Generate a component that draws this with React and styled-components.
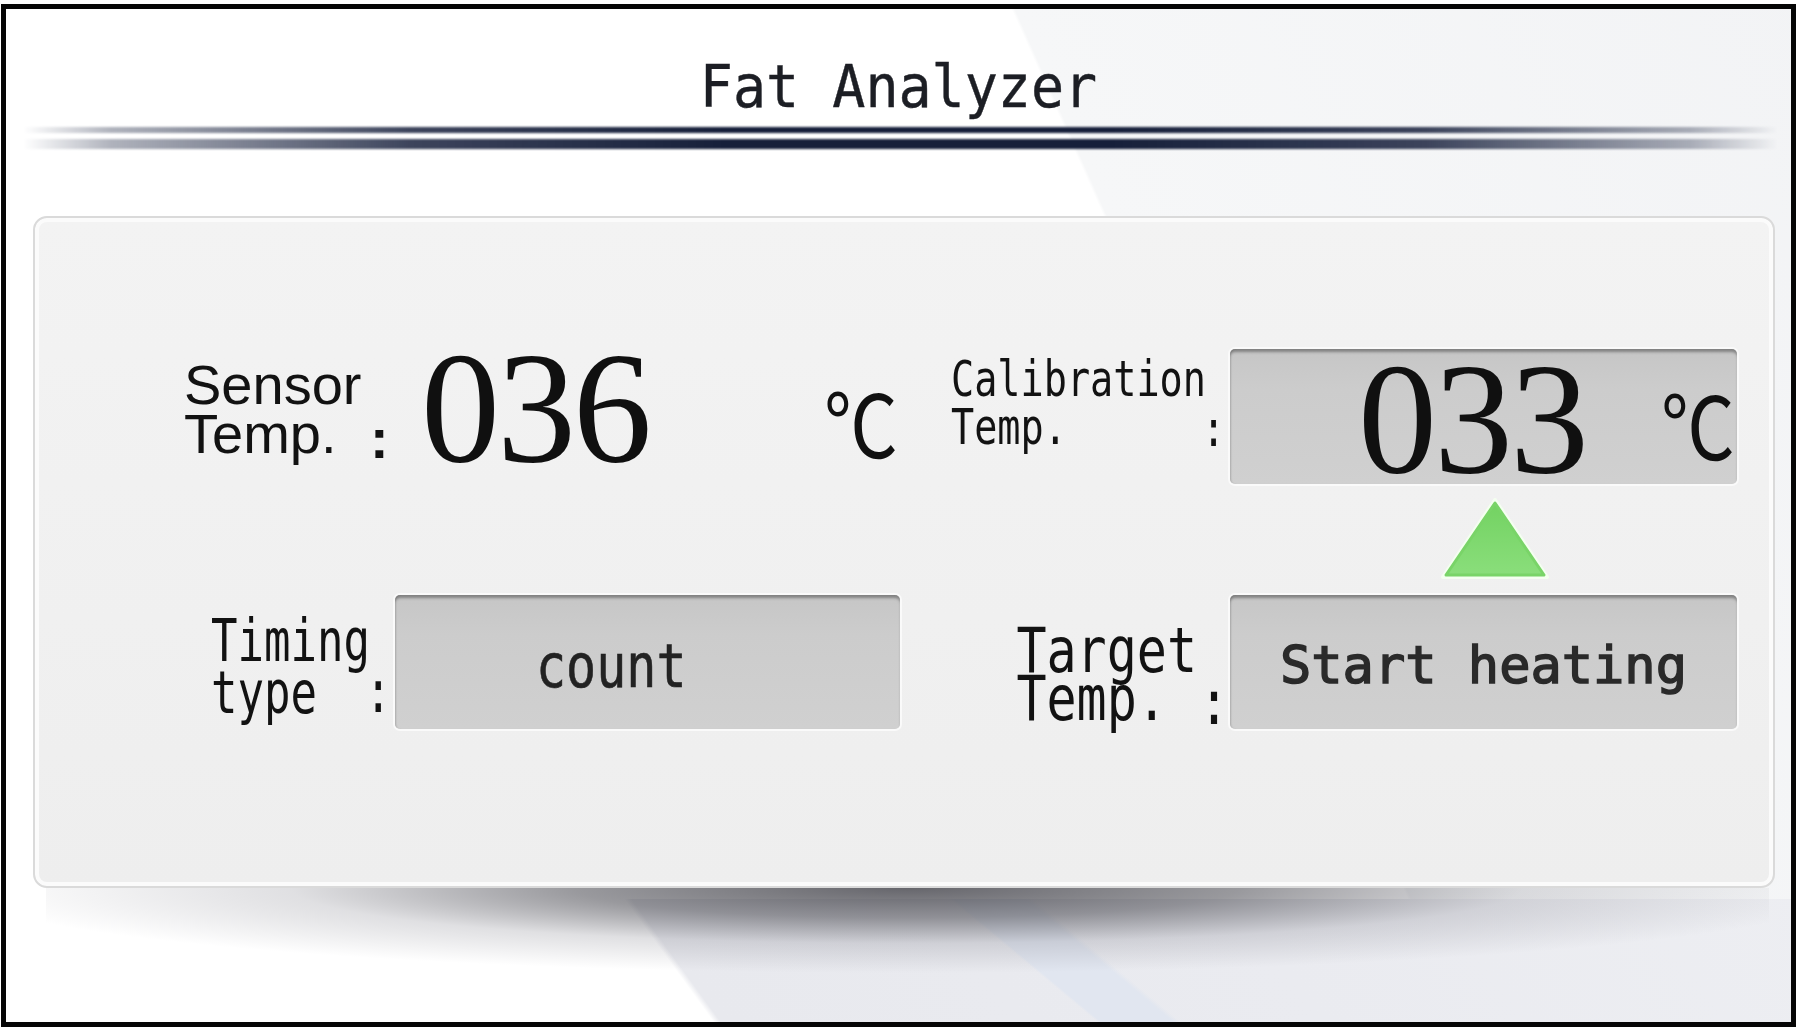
import styled, { createGlobalStyle } from 'styled-components';

const GlobalStyle = createGlobalStyle`
  html, body {
    margin: 0;
    padding: 0;
    background: #ffffff;
  }
  body {
    font-family: 'Liberation Sans', Arial, sans-serif;
    color: #151515;
  }
`;

const Frame = styled.div`
  box-sizing: border-box;
  width: 1795px;
  height: 1023px;
  margin: 4px 0 0 1px;
  border: 5px solid #050505;
  display: flex;
  flex-direction: column;
  padding-top: 47px;
  overflow: hidden;
  background-color: #ffffff;
  background-image:
    linear-gradient(39.8deg, transparent 50%, #e1e6f0 50.5%, #e1e6f0 60%, transparent 61%),
    linear-gradient(54deg, transparent 50%, #e8e9ee 50.3%, #eaebf0 75%, #edeef2 100%),
    linear-gradient(66deg, transparent 50%, #f6f7f8 50.2%, #f2f3f5 100%);
  background-size: 600px 132px, 2338px 140px, 1300px 1100px;
  background-position: 723px 890px, -500px 890px, 574px -59px;
  background-repeat: no-repeat;
`;

const Title = styled.h1`
  margin: 0;
  height: 60px;
  font-family: 'DejaVu Sans Mono', 'Liberation Mono', monospace;
  font-weight: normal;
  font-size: 55px;
  line-height: 60px;
  text-align: center;
  color: #1c1e24;
  -webkit-text-stroke: 0.4px #1c1e24;
  transform: scaleY(1.08);
`;

const Rule = styled.div`
  margin: ${(p) => p.$gap}px 14px 0 18px;
  height: ${(p) => p.$h}px;
  background: linear-gradient(
    90deg,
    rgba(27, 36, 64, 0) 0%,
    rgba(27, 36, 64, 0.35) 5%,
    rgba(27, 36, 64, 0.85) 22%,
    #161f3a 40%,
    #161f3a 62%,
    rgba(27, 36, 64, 0.85) 80%,
    rgba(27, 36, 64, 0.35) 95%,
    rgba(27, 36, 64, 0) 100%
  );
  filter: blur(${(p) => p.$blur}px);
`;

const Panel = styled.div`
  box-sizing: border-box;
  margin: 67px 16px 0 27px;
  padding: 131px 36px 157px 149px;
  border: 2px solid #dadada;
  border-radius: 14px;
  background: linear-gradient(180deg, #f3f3f3 0%, #f0f0f0 60%, #eeeeee 100%);
  box-shadow: inset 0 0 0 4px #fbfbfb;
  display: grid;
  grid-template-columns: 186px 25px 505px 51px 255px 24px 507px;
  grid-template-rows: 135px 111px 134px;
`;

const Shadow = styled.div`
  margin: 0 22px 0 40px;
  height: 85px;
  background: radial-gradient(
    ellipse 55% 100% at 50% 0%,
    rgba(75, 75, 82, 0.85) 0%,
    rgba(85, 85, 92, 0.6) 35%,
    rgba(130, 130, 140, 0.25) 65%,
    rgba(255, 255, 255, 0) 100%
  );
`;

const Cell = styled.div`
  grid-column: ${(p) => p.$col};
  grid-row: ${(p) => p.$row};
  align-self: start;
  justify-self: ${(p) => p.$justify || 'stretch'};
  margin-top: ${(p) => p.$top || 0}px;
  margin-left: ${(p) => p.$left || 0}px;
  margin-right: ${(p) => p.$right || 0}px;
`;

const SansLabel = styled.div`
  font-family: 'Liberation Sans', Arial, sans-serif;
  font-size: 56px;
  line-height: 49px;
  color: #121212;
  white-space: nowrap;
`;

const MonoText = styled.div`
  font-family: 'DejaVu Sans Mono', 'Liberation Mono', monospace;
  font-size: ${(p) => p.$size}px;
  line-height: ${(p) => p.$lh}px;
  color: ${(p) => p.$color || '#121212'};
  -webkit-text-stroke: ${(p) => p.$stroke || 0}px ${(p) => p.$color || '#121212'};
  white-space: pre;
  transform: scaleY(${(p) => p.$scale || 1});
  transform-origin: left top;
`;

const Colon = styled.div`
  font-family: 'Liberation Sans', Arial, sans-serif;
  font-weight: bold;
  font-size: 56px;
  line-height: 46px;
  color: #121212;
`;

const ValueRow = styled.div`
  display: flex;
  justify-content: space-between;
  align-items: flex-start;
  padding: 0 2px 0 26px;
`;

const BigNumber = styled.div`
  font-family: 'Liberation Serif', 'Times New Roman', serif;
  font-size: 158px;
  line-height: 108px;
  letter-spacing: -3px;
  color: #101010;
  margin-top: ${(p) => p.$top}px;
`;

const Unit = styled.div`
  font-family: 'Noto Sans CJK SC', 'DejaVu Sans', sans-serif;
  font-size: 86px;
  line-height: 86px;
  color: #101010;
  margin-top: ${(p) => p.$top}px;
  margin-left: ${(p) => p.$gap || 0}px;
  transform: scaleX(0.86);
  transform-origin: right top;
`;

const Box = styled.div`
  box-sizing: border-box;
  height: ${(p) => p.$h}px;
  border-radius: 5px;
  background: linear-gradient(180deg, #c6c6c6 0%, #cccccc 30%, #d0d0d0 100%);
  box-shadow:
    inset 0 4px 3px -1px rgba(0, 0, 0, 0.35),
    inset 2px 0 2px -1px rgba(0, 0, 0, 0.12),
    0 0 0 2px #fafafa;
  display: flex;
  align-items: flex-start;
  justify-content: ${(p) => p.$justify || 'flex-start'};
  padding: ${(p) => p.$pad};
`;

const Triangle = () => (
  <svg width="110" height="84" viewBox="0 0 110 84">
    <defs>
      <linearGradient id="tri" x1="0" y1="0" x2="0" y2="1">
        <stop offset="0" stopColor="#73d262" />
        <stop offset="1" stopColor="#8ade7b" />
      </linearGradient>
    </defs>
    <polygon
      points="55,3 107,80 3,80"
      fill="url(#tri)"
      stroke="#f4fff0"
      strokeWidth="4"
      strokeLinejoin="round"
    />
    <polygon
      points="55,6 104,78 6,78"
      fill="url(#tri)"
      stroke="#79d468"
      strokeWidth="3"
      strokeLinejoin="round"
    />
  </svg>
);

const App = () => {
  return (
    <>
      <GlobalStyle />
      <Frame>
        <Title>Fat Analyzer</Title>
        <Rule $gap={11} $h={6} $blur={0.8} />
        <Rule $gap={6} $h={10} $blur={0.8} />
        <Panel>
          {/* sensor temp */}
          <Cell $col={1} $row={1} $top={11}>
            <SansLabel>
              Sensor
              <br />
              Temp.
            </SansLabel>
          </Cell>
          <Cell $col={2} $row={1} $top={67} $left={0}>
            <Colon>:</Colon>
          </Cell>
          <Cell $col={3} $row={1}>
            <ValueRow>
              <BigNumber $top={5}>036</BigNumber>
              <Unit $top={29}>℃</Unit>
            </ValueRow>
          </Cell>

          {/* calibration temp */}
          <Cell $col={5} $row={1} $top={6}>
            <MonoText $size={38.5} $lh={37.2} $scale={1.29}>
              {'Calibration\nTemp.'}
            </MonoText>
          </Cell>
          <Cell $col={6} $row={1} $top={58} $left={-4}>
            <MonoText $size={38.5} $lh={33.3} $scale={1.29}>:</MonoText>
          </Cell>
          <Cell $col={7} $row={1}>
            <Box $h={135} $justify="flex-end" $pad="0 2px 0 0">
              <BigNumber $top={16}>033</BigNumber>
              <Unit $top={31} $gap={63}>
                ℃
              </Unit>
            </Box>
          </Cell>

          <Cell $col={7} $row={2} $top={13} $left={23} $justify="center">
            <Triangle />
          </Cell>

          {/* timing type */}
          <Cell $col={1} $row={3} $top={19} $justify="end">
            <MonoText $size={44} $lh={39} $scale={1.34}>
              {'Timing\ntype'}
            </MonoText>
          </Cell>
          <Cell $col={2} $row={3} $top={74} $left={-5}>
            <MonoText $size={44} $lh={34.3} $scale={1.34}>:</MonoText>
          </Cell>
          <Cell $col={3} $row={3}>
            <Box $h={134} $pad="41px 0 0 141px">
              <MonoText $size={50} $lh={50} $scale={1.22} $color="#222" $stroke={0.5}>
                count
              </MonoText>
            </Box>
          </Cell>

          {/* target temp */}
          <Cell $col={5} $row={3} $top={32} $justify="end" $right={9}>
            <MonoText $size={50} $lh={38} $scale={1.26}>
              {'Target\nTemp.'}
            </MonoText>
          </Cell>
          <Cell $col={6} $row={3} $top={86} $left={-7}>
            <MonoText $size={50} $lh={35.7} $scale={1.26}>:</MonoText>
          </Cell>
          <Cell $col={7} $row={3}>
            <Box $h={134} $justify="center" $pad="42px 0 0 0">
              <MonoText $size={52} $lh={56} $color="#2a2a2a" $stroke={1.5}>
                Start heating
              </MonoText>
            </Box>
          </Cell>
        </Panel>
        <Shadow />
      </Frame>
    </>
  );
};

export default App;
